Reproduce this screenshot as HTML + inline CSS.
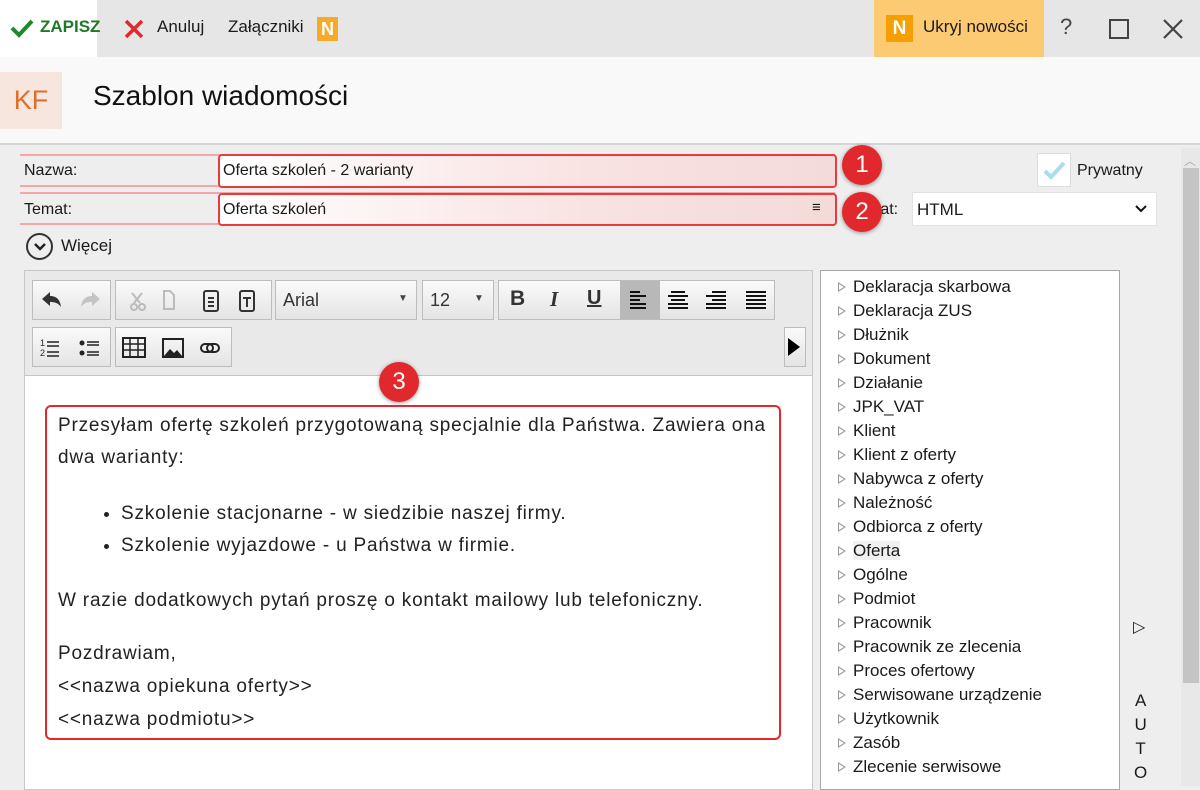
<!DOCTYPE html>
<html><head><meta charset="utf-8"><style>
*{box-sizing:border-box;margin:0;padding:0}
body{width:1200px;height:786px;overflow:hidden;background:#eeeeee;font-family:"Liberation Sans","DejaVu Sans",sans-serif;position:relative;color:#1a1a1a}
.a{position:absolute}
.top{left:0;top:0;width:1200px;height:57px;background:#e6e6e6}
.hdr{left:0;top:57px;width:1200px;height:88px;background:#f9f9f9;border-bottom:2px solid #d6d6d6}
.t17{font-size:17px}
.row{height:33px;border-top:2px solid #f3a7a7;border-bottom:2px solid #f3a7a7}
.inp{background:linear-gradient(90deg,#fff,#f9e2e2 60%,#f5dada);border:2px solid #e83b3b;border-radius:4px}
.circ{width:40px;height:40px;border-radius:50%;background:#e0282d;color:#fff;font-size:24px;text-align:center;line-height:40px;box-shadow:0 1px 4px rgba(0,0,0,.4)}
.tb{background:linear-gradient(#fafafa,#e4e4e4);border:1px solid #bdbdbd;height:40px}
.tree div{height:24px;font-size:17px;line-height:24px;padding-left:32px;position:relative}
.tree div:before{content:"";position:absolute;left:17px;top:7px;border-left:8px solid #999;border-top:5px solid transparent;border-bottom:5px solid transparent}
.tree div:after{content:"";position:absolute;left:18px;top:9px;border-left:5px solid #fff;border-top:3px solid transparent;border-bottom:3px solid transparent}
.ed p,.ed ul{font-size:19px;letter-spacing:0.8px;color:#222}
</style></head><body>
<div class="a top"></div>
<div class="a" style="left:0;top:0;width:97px;height:57px;background:#fff"></div>
<svg class="a" style="left:10px;top:18px" width="24" height="20"><path d="M2 10l7 7L22 3" stroke="#1e8a2a" stroke-width="4" fill="none"/></svg>
<div class="a t17" style="left:40px;top:17px;color:#1e7a25;font-weight:bold">ZAPISZ</div>
<svg class="a" style="left:124px;top:19px" width="20" height="20"><path d="M2 2l16 16M18 2L2 18" stroke="#e0282d" stroke-width="3.5"/></svg>
<div class="a t17" style="left:157px;top:17px">Anuluj</div>
<div class="a t17" style="left:228px;top:17px">Załączniki</div>
<div class="a" style="left:317px;top:17px;width:21px;height:24px;background:#f7a928;color:#fff;font-weight:bold;font-size:18px;text-align:center;line-height:24px">N</div>
<div class="a" style="left:874px;top:0;width:170px;height:57px;background:#fdca74"></div>
<div class="a" style="left:886px;top:15px;width:27px;height:27px;background:#f59f00;color:#fff;font-weight:bold;font-size:19px;text-align:center;line-height:27px">N</div>
<div class="a t17" style="left:923px;top:17px">Ukryj nowości</div>
<div class="a" style="left:1060px;top:14px;font-size:22px;color:#444">?</div>
<div class="a" style="left:1109px;top:19px;width:20px;height:20px;border:2px solid #444"></div>
<svg class="a" style="left:1162px;top:18px" width="22" height="22"><path d="M2 2l18 18M20 2L2 20" stroke="#444" stroke-width="2.2"/></svg>
<div class="a hdr"></div>
<div class="a" style="left:0;top:72px;width:62px;height:57px;background:#f6e6de;color:#e06d2c;font-size:27px;line-height:57px;text-align:center">KF</div>
<div class="a" style="left:93px;top:80px;font-size:28px;color:#111">Szablon wiadomości</div>
<div class="a" style="left:1181px;top:148px;width:19px;height:638px;background:#e8e8e8"></div>
<div class="a" style="left:1183px;top:168px;width:16px;height:515px;background:#c4c4c4"></div>
<div class="a" style="left:1184px;top:152px;font-size:12px;color:#aaa">︿</div>
<div class="a row" style="left:20px;top:154px;width:815px"></div>
<div class="a row" style="left:20px;top:192px;width:815px"></div>
<div class="a" style="left:24px;top:162px;font-size:16px">Nazwa:</div>
<div class="a" style="left:24px;top:201px;font-size:16px">Temat:</div>
<div class="a inp" style="left:218px;top:154px;width:619px;height:34px"></div>
<div class="a inp" style="left:218px;top:193px;width:619px;height:33px"></div>
<div class="a" style="left:223px;top:162px;font-size:16px">Oferta szkoleń - 2 warianty</div>
<div class="a" style="left:223px;top:201px;font-size:16px">Oferta szkoleń</div>
<div class="a" style="left:812px;top:199px;font-size:15px">≡</div>
<div class="a" style="left:843px;top:201px;font-size:16px">Format:</div>
<div class="a circ" style="left:842px;top:145px">1</div>
<div class="a circ" style="left:842px;top:192px">2</div>
<div class="a" style="left:1037px;top:153px;width:34px;height:34px;background:#fff;border:1px solid #ddd"></div>
<svg class="a" style="left:1043px;top:160px" width="24" height="20"><path d="M2 11l6 6L21 3" stroke="#aadcf0" stroke-width="4" fill="none"/></svg>
<div class="a" style="left:1077px;top:162px;font-size:16px">Prywatny</div>
<div class="a" style="left:912px;top:192px;width:245px;height:34px;background:#fff;border:1px solid #e2e2e2"></div>
<div class="a" style="left:917px;top:200px;font-size:17px">HTML</div>
<svg class="a" style="left:1135px;top:205px" width="12" height="8"><path d="M1 1l5 5 5-5" stroke="#111" stroke-width="2" fill="none"/></svg>
<div class="a" style="left:26px;top:233px;width:27px;height:27px;border:2px solid #333;border-radius:50%"></div>
<svg class="a" style="left:33px;top:242px" width="14" height="9"><path d="M2 2l5 5 5-5" stroke="#222" stroke-width="2.5" fill="none"/></svg>
<div class="a" style="left:61px;top:236px;font-size:17px">Więcej</div>
<div class="a" style="left:24px;top:270px;width:789px;height:520px;background:#fff;border:1px solid #c8c8c8"></div>
<div class="a" style="left:25px;top:271px;width:787px;height:105px;background:#e9e9e9;border-bottom:1px solid #c4c4c4"></div>
<div class="a tb" style="left:32px;top:280px;width:79px"></div>
<div class="a tb" style="left:115px;top:280px;width:157px"></div>
<div class="a tb" style="left:275px;top:280px;width:142px"></div>
<div class="a tb" style="left:422px;top:280px;width:72px"></div>
<div class="a tb" style="left:498px;top:280px;width:277px"></div>
<div class="a" style="left:620px;top:281px;width:40px;height:38px;background:#b8b8b8"></div>
<div class="a tb" style="left:32px;top:327px;width:79px"></div>
<div class="a tb" style="left:115px;top:327px;width:117px"></div>
<div class="a tb" style="left:784px;top:327px;width:22px"></div>
<div class="a" style="left:788px;top:338px;border-left:12px solid #000;border-top:9px solid transparent;border-bottom:9px solid transparent"></div>
<svg class="a" style="left:40px;top:289px" width="64" height="22">
<path d="M2 10l8-7v4c6 0 10 3 11 11-3-4-6-5-11-5v4z" fill="#333"/>
<path d="M60 10l-8-7v4c-6 0-10 3-11 11 3-4 6-5 11-5v4z" fill="#c4c4c4"/>
</svg>
<div class="a" style="left:283px;top:290px;font-size:18px;color:#333">Arial</div>
<div class="a" style="left:398px;top:293px;font-size:10px;color:#444">▼</div>
<div class="a" style="left:430px;top:290px;font-size:18px;color:#333">12</div>
<div class="a" style="left:474px;top:293px;font-size:10px;color:#444">▼</div>
<div class="a" style="left:510px;top:287px;font-size:21px;font-weight:bold;color:#333">B</div>
<div class="a" style="left:550px;top:287px;font-size:21px;font-weight:bold;font-style:italic;color:#333;font-family:'Liberation Serif'">I</div>
<div class="a" style="left:587px;top:287px;font-size:20px;font-weight:bold;text-decoration:underline;color:#333">U</div>
<svg class="a" style="left:128px;top:287px" width="230" height="28" fill="none" stroke="#333" stroke-width="2">
<path d="M4 6l8 10M14 6L6 16" stroke="#bbb"/><circle cx="6" cy="20" r="3" stroke="#bbb"/><circle cx="14" cy="20" r="3" stroke="#bbb"/>
<path d="M36 4h6l4 4v14h-10z" stroke="#bbb"/>
<rect x="76" y="4" width="14" height="20" rx="2"/><path d="M80 11h6M80 15h6M80 19h6"/>
<rect x="112" y="4" width="14" height="20" rx="2"/><path d="M115 11h8M119 11v9"/>
</svg>
<svg class="a" style="left:628px;top:290px" width="140" height="20" fill="#111">
<rect x="2" y="1" width="10" height="2"/><rect x="2" y="5" width="16" height="2"/><rect x="2" y="9" width="10" height="2"/><rect x="2" y="13" width="16" height="2"/><rect x="2" y="17" width="16" height="2"/>
<rect x="43" y="1" width="14" height="2"/><rect x="40" y="5" width="20" height="2"/><rect x="43" y="9" width="14" height="2"/><rect x="40" y="13" width="20" height="2"/><rect x="40" y="17" width="20" height="2"/>
<rect x="84" y="1" width="14" height="2"/><rect x="78" y="5" width="20" height="2"/><rect x="84" y="9" width="14" height="2"/><rect x="78" y="13" width="20" height="2"/><rect x="78" y="17" width="20" height="2"/>
<rect x="118" y="1" width="20" height="2"/><rect x="118" y="5" width="20" height="2"/><rect x="118" y="9" width="20" height="2"/><rect x="118" y="13" width="20" height="2"/><rect x="118" y="17" width="20" height="2"/>
</svg>
<svg class="a" style="left:40px;top:336px" width="190" height="24" fill="#222" stroke="#222">
<text x="0" y="10" font-size="9" stroke="none">1</text><text x="0" y="20" font-size="9" stroke="none">2</text><path d="M7 6h12M7 10h12M7 16h12M7 20h12" stroke-width="1.5"/>
<circle cx="42" cy="7" r="2.5" stroke="none"/><circle cx="42" cy="17" r="2.5" stroke="none"/><path d="M47 6h12M47 9h12M47 16h12M47 19h12" stroke-width="1.5"/>
<rect x="83" y="2" width="22" height="19" fill="none" stroke-width="2"/><path d="M83 8h22M83 14h22M90 3v18M98 3v18" stroke-width="1.5"/>
<rect x="123" y="3" width="20" height="18" fill="none" stroke-width="2"/><path d="M124 20l6-7 4 4 3-3 5 6z" stroke="none"/>
<rect x="161" y="8" width="12" height="8" rx="4" fill="none" stroke-width="2"/><rect x="167" y="8" width="12" height="8" rx="4" fill="none" stroke-width="2"/>
</svg>
<div class="a circ" style="left:379px;top:362px">3</div>
<div class="a" style="left:45px;top:405px;width:736px;height:335px;border:2px solid #e0282d;border-radius:6px"></div>
<div class="a ed" style="left:58px;top:410px;width:718px;line-height:32px">
<p>Przesyłam ofertę szkoleń przygotowaną specjalnie dla Państwa. Zawiera ona dwa warianty:</p>
<ul style="margin:24px 0 23px 63px;line-height:32px"><li>Szkolenie stacjonarne - w siedzibie naszej firmy.</li><li>Szkolenie wyjazdowe - u Państwa w firmie.</li></ul>
<p>W razie dodatkowych pytań proszę o kontakt mailowy lub telefoniczny.</p>
<p style="margin-top:20px;line-height:33px">Pozdrawiam,<br>&lt;&lt;nazwa opiekuna oferty&gt;&gt;<br>&lt;&lt;nazwa podmiotu&gt;&gt;</p>
</div>
<div class="a tree" style="left:820px;top:270px;width:300px;height:520px;background:#fff;border:1px solid #a8a8a8;padding-top:4px">
<div>Deklaracja skarbowa</div><div>Deklaracja ZUS</div><div>Dłużnik</div><div>Dokument</div><div>Działanie</div><div>JPK_VAT</div><div>Klient</div><div>Klient z oferty</div><div>Nabywca z oferty</div><div>Należność</div><div>Odbiorca z oferty</div><div><span style="background:#f0f0f0">Oferta</span></div><div>Ogólne</div><div>Podmiot</div><div>Pracownik</div><div>Pracownik ze zlecenia</div><div>Proces ofertowy</div><div>Serwisowane urządzenie</div><div>Użytkownik</div><div>Zasób</div><div>Zlecenie serwisowe</div>
</div>
<div class="a" style="left:1133px;top:617px;font-size:16px">▷</div>
<div class="a" style="left:1134px;top:689px;font-size:17px;line-height:24px;text-align:center">A<br>U<br>T<br>O</div>
</body></html>
